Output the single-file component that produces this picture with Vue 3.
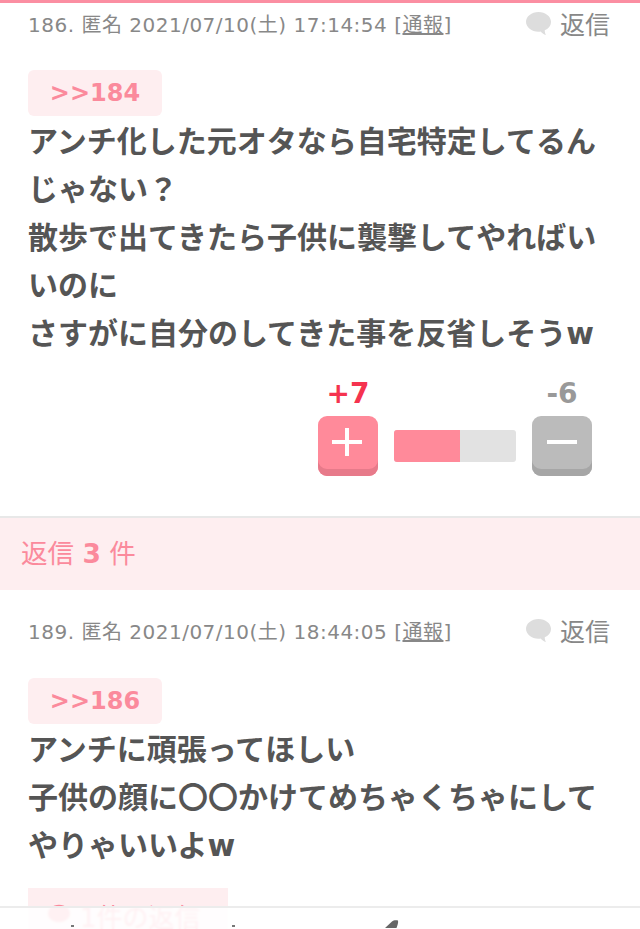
<template>
  <div class="page">
    <section class="comment">
      <div class="meta">
        <p class="info">186. 匿名 2021/07/10(土) 17:14:54 [<u>通報</u>]</p>
        <span class="reply">
          <svg class="bubble" viewBox="0 0 28 26"><path d="M14 1C6.800 1 1 5.600 1 11.300c0 5.700 5.800 10.300 13 10.300.8 0 1.500 0 2.200-.2 1.200 1.500 3.200 3 5.600 3.600-.9-1.300-1.300-3-1.300-4.900 4.300-1.700 6.500-5 6.500-8.800C27 5.600 21.200 1 14 1z" /></svg>
          返信
        </span>
      </div>
      <div class="quote">&gt;&gt;184</div>
      <p class="body">
        アンチ化した元オタなら自宅特定してるんじゃない？<br />
        散歩で出てきたら子供に襲撃してやればいいのに<br />
        さすがに自分のしてきた事を反省しそうw
      </p>
      <div class="votes">
        <div class="vote">
          <span class="count plus">+7</span>
          <button class="vote-btn pink">
            <svg viewBox="0 0 60 60"><path d="M29 12v28M14 26h30" /></svg>
          </button>
        </div>
        <div class="bar"><div class="bar-fill" :style="{ width: ratio + '%' }"></div></div>
        <div class="vote">
          <span class="count minus">-6</span>
          <button class="vote-btn grey">
            <svg viewBox="0 0 60 60"><path d="M15 26h30" /></svg>
          </button>
        </div>
      </div>
    </section>

    <div class="band">返信 <b>3</b> 件</div>

    <section class="comment second">
      <div class="meta">
        <p class="info">189. 匿名 2021/07/10(土) 18:44:05 [<u>通報</u>]</p>
        <span class="reply">
          <svg class="bubble" viewBox="0 0 28 26"><path d="M14 1C6.800 1 1 5.600 1 11.300c0 5.700 5.800 10.300 13 10.300.8 0 1.500 0 2.200-.2 1.200 1.500 3.200 3 5.600 3.600-.9-1.300-1.300-3-1.300-4.900 4.300-1.700 6.500-5 6.500-8.800C27 5.600 21.200 1 14 1z" /></svg>
          返信
        </span>
      </div>
      <div class="quote">&gt;&gt;186</div>
      <p class="body">
        アンチに頑張ってほしい<br />
        子供の顔に〇〇かけてめちゃくちゃにして<br />
        やりゃいいよw
      </p>
      <div class="replies">
        <svg class="small-bubble" viewBox="0 0 28 26"><path d="M14 1C6.800 1 1 5.600 1 11.300c0 5.700 5.800 10.300 13 10.300 6.200 0 13-4.600 13-10.300C27 5.600 21.200 1 14 1z" /></svg>
        1件の返信
      </div>
    </section>

    <nav class="bottom">
      <i class="mark mark-left"></i>
      <svg class="nav-icon" viewBox="0 0 14 8"><path d="M0 8 7 1.500C8.500 0 11 0 13 .5c.5 2-.5 5-1.500 7.500z" /></svg>
      <i class="mark mark-right"></i>
    </nav>
  </div>
</template>

<script setup>
const ratio = 7 / 13 * 100
</script>

<style scoped>
.page {
  position: relative;
  height: 929px;
  overflow: hidden;
  background: #fff;
  border-top: 3px solid #fb8ea2;
  box-sizing: border-box;
  font-family: "DejaVu Sans", "Noto Sans CJK JP", sans-serif;
  color: #555;
}
.comment {
  padding: 0 28px;
  height: 515px;
  box-sizing: border-box;
  border-bottom: 2px solid #e8e8e8;
}
.comment.second {
  height: auto;
  padding-top: 20px;
  border-bottom: none;
}
.meta {
  display: flex;
  justify-content: space-between;
  align-items: center;
  height: 40px;
}
.info {
  margin: 0;
  font-size: 20px;
  letter-spacing: 0.5px;
  color: #888;
}
.reply {
  display: flex;
  align-items: center;
  gap: 8px;
  margin-right: 2px;
  font-size: 25px;
  color: #888;
}
.bubble {
  width: 27px;
  height: 25px;
  fill: #ddd;
}
.quote {
  margin-top: 27px;
  margin-bottom: 2px;
  width: 134px;
  height: 46px;
  line-height: 46px;
  text-align: center;
  border-radius: 6px;
  background: #feeef0;
  color: #fb8a9c;
  font-size: 24px;
  font-weight: 700;
}
.second .quote {
  margin-top: 28px;
}
.body {
  margin: 0;
  font-size: 30px;
  line-height: 48px;
  font-weight: 700;
  color: #555;
}
.votes {
  display: flex;
  justify-content: flex-end;
  align-items: flex-end;
  gap: 16px;
  margin-top: 19px;
  padding-right: 20px;
}
.vote {
  display: flex;
  flex-direction: column;
  align-items: center;
}
.count {
  font-size: 28px;
  line-height: 34px;
  font-weight: 700;
  height: 39px;
}
.count.plus {
  color: #f5334f;
}
.count.minus {
  color: #999;
}
.vote-btn {
  width: 60px;
  height: 60px;
  padding: 0;
  border: none;
  border-radius: 9px;
}
.vote-btn svg {
  display: block;
  width: 60px;
  height: 60px;
  fill: none;
  stroke: #fff;
  stroke-width: 4;
}
.vote-btn.pink {
  background: #ff8a9a;
  box-shadow: inset 0 -7px 0 #e77a8a;
}
.vote-btn.grey {
  background: #bbb;
  box-shadow: inset 0 -7px 0 #a6a6a6;
}
.bar {
  width: 122px;
  height: 32px;
  margin-bottom: 14px;
  border-radius: 3px;
  overflow: hidden;
  background: #e2e2e2;
}
.bar-fill {
  height: 100%;
  background: #ff8a9a;
}
.band {
  height: 72px;
  line-height: 72px;
  padding-left: 21px;
  background: #feeef0;
  color: #fb8a9c;
  font-size: 26.500px;
}
.band b {
  font-weight: 700;
}
.replies {
  display: flex;
  align-items: center;
  gap: 9px;
  margin-top: 18px;
  width: 200px;
  height: 54px;
  padding-left: 19px;
  box-sizing: border-box;
  background: #feeef0;
  color: #fb8a9c;
  font-size: 26px;
}
.small-bubble {
  width: 24px;
  height: 22px;
  fill: #fb8a9c;
}
.bottom {
  position: absolute;
  left: 0;
  right: 0;
  bottom: 0;
  height: 21px;
  overflow: hidden;
  border-top: 2px solid #ececec;
  background: rgba(255, 255, 255, 0.88);
  backdrop-filter: blur(1px);
}
.mark {
  position: absolute;
  top: 17px;
  width: 3px;
  height: 2px;
  background: #777;
}
.mark-left {
  left: 71px;
}
.mark-right {
  left: 232px;
}
.nav-icon {
  position: absolute;
  left: 385px;
  top: 12px;
  width: 14px;
  height: 8px;
  fill: #666;
}
</style>
